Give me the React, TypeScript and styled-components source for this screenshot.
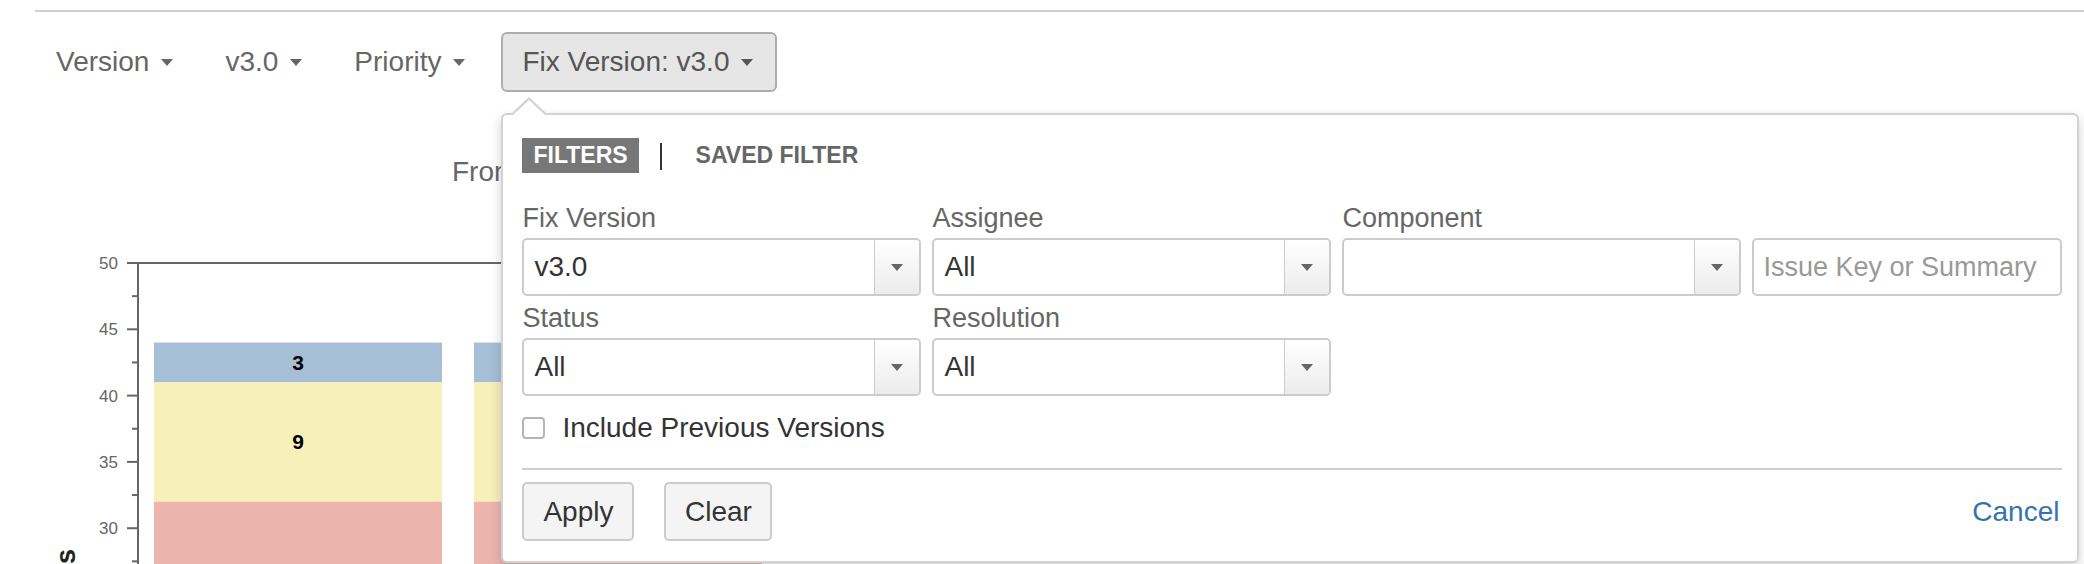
import React from 'react';
import styled, { createGlobalStyle } from 'styled-components';

const GlobalStyle = createGlobalStyle`
  html, body {
    margin: 0;
    padding: 0;
    background: #fff;
    overflow: hidden;
  }
  body {
    font-family: "Liberation Sans", Arial, sans-serif;
  }
  * {
    box-sizing: border-box;
  }
`;

const Page = styled.div`
  width: 2084px;
  height: 564px;
  padding-top: 10px;
  overflow: hidden;
`;

const TopRule = styled.div`
  margin-left: 35px;
  border-top: 2px solid #cfcfcf;
`;

const Toolbar = styled.div`
  display: flex;
  align-items: center;
  height: 60px;
  margin-top: 20px;
  padding-left: 30px;
`;

const ToolbarItem = styled.div`
  display: flex;
  align-items: center;
  gap: 12px;
  padding: 0 26px;
  font-size: 28px;
  color: #666;
`;

const Caret = styled.span<{ $color?: string }>`
  display: inline-block;
  width: 0;
  height: 0;
  border-left: 6.5px solid transparent;
  border-right: 6.5px solid transparent;
  border-top: 7px solid ${(p) => p.$color || '#666'};
`;

const DropdownWrap = styled.div`
  position: relative;
  margin-left: 10px;
`;

const ActiveButton = styled.div`
  display: flex;
  align-items: center;
  gap: 12px;
  height: 60px;
  padding: 0 22px 0 19px;
  background: #e6e6e6;
  border: 2px solid #adadad;
  border-radius: 6px;
  font-size: 28px;
  color: #555;
`;

const Popover = styled.div`
  position: absolute;
  left: 0;
  top: 81px;
  width: 1578px;
  padding: 23px 15px 20px 19px;
  background: #fff;
  border: 2px solid #d2d2d2;
  border-radius: 6px;
  box-shadow: 0 5px 12px rgba(0, 0, 0, 0.18);
  z-index: 5;

  &::before,
  &::after {
    content: '';
    position: absolute;
    width: 0;
    height: 0;
  }
  &::before {
    left: 8px;
    top: -18px;
    border-left: 18px solid transparent;
    border-right: 18px solid transparent;
    border-bottom: 17px solid #d2d2d2;
  }
  &::after {
    left: 10px;
    top: -15px;
    border-left: 16px solid transparent;
    border-right: 16px solid transparent;
    border-bottom: 15px solid #fff;
  }
`;

const Tabs = styled.div`
  display: flex;
  align-items: center;
  height: 35px;
`;

const Tab = styled.div<{ $active?: boolean }>`
  height: 35px;
  line-height: 35px;
  padding: 0 11px;
  font-size: 23px;
  font-weight: bold;
  background: ${(p) => (p.$active ? '#777' : 'transparent')};
  color: ${(p) => (p.$active ? '#fff' : '#666')};
`;

const TabDivider = styled.span`
  width: 2px;
  height: 27px;
  margin: 2px 23px 0 21px;
  background: #333;
`;

const FieldGrid = styled.div`
  display: grid;
  grid-template-columns: 399px 399px 399px 1fr;
  column-gap: 11px;
  row-gap: 6px;
  margin-top: 29px;
  align-items: end;
`;

const Field = styled.div`
  display: flex;
  flex-direction: column;
  gap: 4px;
`;

const Label = styled.div`
  height: 32px;
  line-height: 32px;
  font-size: 27px;
  color: #666;
`;

const SelectBox = styled.div`
  display: flex;
  height: 58px;
  border: 2px solid #ccc;
  border-radius: 5px;
  background: #fff;
  overflow: hidden;
`;

const SelectValue = styled.div`
  flex: 1;
  display: flex;
  align-items: center;
  padding-left: 10px;
  font-size: 28px;
  color: #333;
`;

const SelectArrow = styled.div`
  width: 45px;
  display: flex;
  align-items: center;
  justify-content: center;
  border-left: 1px solid #ccc;
  background: linear-gradient(#ffffff, #ececec);
`;

const SearchInput = styled.input`
  height: 58px;
  width: 100%;
  padding: 0 0 0 9px;
  border: 2px solid #ccc;
  border-radius: 5px;
  font-family: "Liberation Sans", Arial, sans-serif;
  font-size: 27px;
  color: #333;
  outline: none;
  &::placeholder {
    color: #999;
  }
`;

const CheckRow = styled.label`
  display: flex;
  align-items: center;
  gap: 17px;
  height: 24px;
  margin-top: 20px;
  font-size: 28px;
  color: #333;
`;

const CheckBox = styled.span`
  width: 23px;
  height: 22px;
  border: 2px solid #b5b5b5;
  border-radius: 4px;
  background: #fff;
`;

const Rule = styled.div`
  margin-top: 28px;
  border-top: 2px solid #cfcfcf;
`;

const Footer = styled.div`
  display: flex;
  align-items: center;
  gap: 30px;
  margin-top: 12px;
`;

const Btn = styled.div<{ $w: number }>`
  width: ${(p) => p.$w}px;
  height: 59px;
  display: flex;
  align-items: center;
  justify-content: center;
  background: #f4f4f4;
  border: 2px solid #ccc;
  border-radius: 5px;
  font-size: 28px;
  color: #333;
`;

const CancelLink = styled.a`
  margin-left: auto;
  margin-right: 3px;
  font-size: 28px;
  color: #3572b0;
  text-decoration: none;
`;

const ChartTitle = styled.div`
  margin-top: 60px;
  padding-left: 452px;
  height: 40px;
  line-height: 40px;
  font-size: 28px;
  color: #666;
  white-space: nowrap;
`;

const ChartSvg = styled.svg`
  display: block;
  margin-top: 48px;
`;

const Select: React.FC<{ value?: string }> = ({ value }) => (
  <SelectBox>
    <SelectValue>{value}</SelectValue>
    <SelectArrow>
      <Caret $color="#666" />
    </SelectArrow>
  </SelectBox>
);

const ticks = [50, 45, 40, 35, 30];
const yOf = (v: number) => 23 + (50 - v) * 13.26;

const Chart: React.FC = () => (
  <ChartSvg width={2084} height={324} viewBox="0 0 2084 324">
    <g stroke="#666" strokeWidth={2}>
      <line x1={138} y1={22} x2={138} y2={324} />
      <line x1={127} y1={23} x2={1900} y2={23} />
      {ticks.map((t) => (
        <line key={t} x1={127} y1={yOf(t)} x2={138} y2={yOf(t)} />
      ))}
      {ticks.map((t) => (
        <line key={'m' + t} x1={132} y1={yOf(t - 2.5)} x2={138} y2={yOf(t - 2.5)} />
      ))}
    </g>
    <g fill="#666" fontSize={17} fontFamily="Liberation Sans, Arial, sans-serif" textAnchor="end">
      {ticks.map((t) => (
        <text key={t} x={118} y={yOf(t) + 6}>
          {t}
        </text>
      ))}
    </g>
    {[154, 474].map((x) => (
      <g key={x}>
        <rect x={x} y={yOf(44)} width={288} height={yOf(41) - yOf(44)} fill="#a7bfd6" />
        <rect x={x} y={yOf(41)} width={288} height={yOf(32) - yOf(41)} fill="#f7f0bb" />
        <rect x={x} y={yOf(32)} width={288} height={324 - yOf(32)} fill="#ebb5ae" />
      </g>
    ))}
    <g fill="#000" fontSize={21} fontWeight="bold" fontFamily="Liberation Sans, Arial, sans-serif" textAnchor="middle">
      <text x={298} y={130}>3</text>
      <text x={298} y={209}>9</text>
    </g>
    <text
      transform="translate(75, 309) rotate(-90)"
      textAnchor="end"
      fontSize={27}
      fontWeight="bold"
      fill="#222"
      fontFamily="Liberation Sans, Arial, sans-serif"
    >
      Issues
    </text>
  </ChartSvg>
);

export default function App() {
  return (
    <Page>
      <GlobalStyle />
      <TopRule />
      <Toolbar>
        <ToolbarItem>
          Version <Caret />
        </ToolbarItem>
        <ToolbarItem>
          v3.0 <Caret />
        </ToolbarItem>
        <ToolbarItem>
          Priority <Caret />
        </ToolbarItem>
        <DropdownWrap>
          <ActiveButton>
            Fix Version: v3.0 <Caret $color="#555" />
          </ActiveButton>
          <Popover>
            <Tabs>
              <Tab $active>FILTERS</Tab>
              <TabDivider />
              <Tab>SAVED FILTER</Tab>
            </Tabs>
            <FieldGrid>
              <Field>
                <Label>Fix Version</Label>
                <Select value="v3.0" />
              </Field>
              <Field>
                <Label>Assignee</Label>
                <Select value="All" />
              </Field>
              <Field>
                <Label>Component</Label>
                <Select />
              </Field>
              <Field>
                <SearchInput placeholder="Issue Key or Summary" />
              </Field>
              <Field>
                <Label>Status</Label>
                <Select value="All" />
              </Field>
              <Field>
                <Label>Resolution</Label>
                <Select value="All" />
              </Field>
            </FieldGrid>
            <CheckRow>
              <CheckBox />
              Include Previous Versions
            </CheckRow>
            <Rule />
            <Footer>
              <Btn $w={112}>Apply</Btn>
              <Btn $w={108}>Clear</Btn>
              <CancelLink href="#">Cancel</CancelLink>
            </Footer>
          </Popover>
        </DropdownWrap>
      </Toolbar>
      <ChartTitle>From 2017-01-01 to 2017-03-31</ChartTitle>
      <Chart />
    </Page>
  );
}
